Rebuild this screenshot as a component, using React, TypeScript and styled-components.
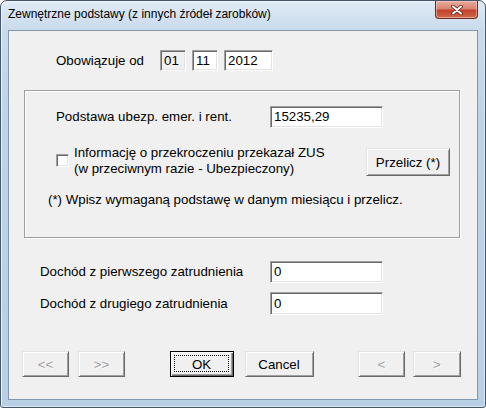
import styled, { createGlobalStyle } from "styled-components";

const GlobalStyle = createGlobalStyle`
  html, body {
    margin: 0;
    padding: 0;
    background: #ffffff;
  }
  body {
    font-family: "Liberation Sans", Arial, sans-serif;
    font-size: 13.3px;
    color: #000;
  }
`;

const Window = styled.div`
  width: 486px;
  height: 408px;
  box-sizing: border-box;
  display: flex;
  flex-direction: column;
  padding: 0 7px 7px 7px;
  border: 1px solid #44566a;
  border-radius: 7px 7px 3px 3px;
  background: linear-gradient(180deg, #e0ebf6 0px, #cadbec 28px, #bed3e8 120px, #b8cfe6 100%);
  box-shadow: inset 1px 1px 0 #eef4fa, inset -1px -1px 0 #dbe7f2;
`;

const TitleBar = styled.div`
  height: 29px;
  display: flex;
  justify-content: space-between;
  align-items: flex-start;
`;

const Title = styled.span`
  font-family: "Liberation Sans", Arial, sans-serif;
  font-size: 12px;
  line-height: 14px;
  margin-top: 6px;
  color: #000;
`;

const CloseButton = styled.div`
  width: 43px;
  height: 18px;
  box-sizing: border-box;
  display: flex;
  align-items: center;
  justify-content: center;
  border: 1px solid #6c2a20;
  border-top: none;
  border-radius: 0 0 4px 4px;
  background: linear-gradient(180deg, #e9ad9e 0%, #d98571 45%, #c3412a 55%, #cf6a4c 100%);
  box-shadow: inset 0 0 0 1px rgba(255, 220, 210, 0.5);
`;

const Client = styled.div`
  flex: 1;
  box-sizing: border-box;
  background: #f0f0f0;
  border: 1px solid #8498ad;
  display: flex;
  flex-direction: column;
`;

const Row = styled.div<{ $top: number; $left: number }>`
  display: flex;
  align-items: center;
  margin-top: ${(p) => p.$top}px;
  padding-left: ${(p) => p.$left}px;
`;

const Label = styled.span<{ $width: number }>`
  width: ${(p) => p.$width}px;
  flex-shrink: 0;
  line-height: 16px;
`;

const Field = styled.div<{ $width: number; $height?: number; $readOnly?: boolean }>`
  width: ${(p) => p.$width}px;
  height: ${(p) => p.$height ?? 22}px;
  box-sizing: border-box;
  flex-shrink: 0;
  background: ${(p) => (p.$readOnly ? "#f0f0f0" : "#ffffff")};
  border-top: 1px solid #a0a0a0;
  border-left: 1px solid #a0a0a0;
  border-bottom: 1px solid #ffffff;
  border-right: 1px solid #ffffff;
  box-shadow: inset 1px 1px 0 #696969, inset -1px -1px 0 #e3e3e3;
  padding: 0 2px 0 3px;
  display: flex;
  align-items: center;
  line-height: 16px;
`;

const DateFields = styled.div`
  display: flex;
  gap: 6px;
`;

const GroupBox = styled.div`
  margin: 19px 0 0 15px;
  width: 436px;
  height: 148px;
  box-sizing: border-box;
  border: 1px solid #a0a0a0;
  box-shadow: inset 1px 1px 0 #ffffff, 1px 1px 0 #ffffff;
  display: flex;
  flex-direction: column;
`;

const CheckRow = styled.div`
  display: flex;
  align-items: flex-start;
  margin-top: 17px;
  padding-left: 31px;
`;

const CheckBox = styled.div`
  width: 13px;
  height: 13px;
  box-sizing: border-box;
  flex-shrink: 0;
  background: #ffffff;
  border-top: 1px solid #a0a0a0;
  border-left: 1px solid #a0a0a0;
  border-bottom: 1px solid #ffffff;
  border-right: 1px solid #ffffff;
  box-shadow: inset 1px 1px 0 #696969, inset -1px -1px 0 #e3e3e3;
  margin-top: 9px;
`;

const CheckText = styled.div`
  margin-left: 5px;
  line-height: 16px;
  width: 292px;
`;

const Button = styled.div<{ $width: number; $height?: number; $top?: number; $disabled?: boolean; $default?: boolean }>`
  width: ${(p) => p.$width}px;
  height: ${(p) => p.$height ?? 26}px;
  margin-top: ${(p) => p.$top ?? 0}px;
  box-sizing: border-box;
  flex-shrink: 0;
  display: flex;
  align-items: center;
  justify-content: center;
  background: #f0f0f0;
  color: ${(p) => (p.$disabled ? "#a0a0a0" : "#000")};
  text-shadow: ${(p) => (p.$disabled ? "1px 1px 0 #ffffff" : "none")};
  border-top: 1px solid ${(p) => (p.$default ? "#000" : "#e3e3e3")};
  border-left: 1px solid ${(p) => (p.$default ? "#000" : "#e3e3e3")};
  border-bottom: 1px solid ${(p) => (p.$default ? "#000" : "#696969")};
  border-right: 1px solid ${(p) => (p.$default ? "#000" : "#696969")};
  box-shadow: ${(p) =>
    p.$default
      ? "inset 1px 1px 0 #ffffff, inset -1px -1px 0 #696969, inset -2px -2px 0 #a0a0a0"
      : "inset 1px 1px 0 #ffffff, inset -1px -1px 0 #a0a0a0"};
  position: relative;
`;

const FocusRing = styled.span`
  position: absolute;
  inset: 3px 4px 4px 3px;
  border: 1px dotted #000;
`;

const Footnote = styled.div`
  margin-top: 15px;
  padding-left: 23px;
  line-height: 16px;
`;

const ButtonBar = styled.div`
  margin-top: 36px;
  padding: 0 16px 0 13px;
  display: flex;
  justify-content: space-between;
`;

const ButtonGroup = styled.div<{ $gap: number }>`
  display: flex;
  gap: ${(p) => p.$gap}px;
`;

function CloseGlyph() {
  return (
    <svg width="12" height="10" viewBox="0 0 12 10">
      <path d="M2 1.5 L10 8.5 M10 1.5 L2 8.5" stroke="#5a1c12" strokeWidth="3.6" strokeLinecap="round" />
      <path d="M2 1.5 L10 8.5 M10 1.5 L2 8.5" stroke="#ffffff" strokeWidth="2" strokeLinecap="round" />
    </svg>
  );
}

export default function App() {
  return (
    <>
      <GlobalStyle />
      <Window>
        <TitleBar>
          <Title>Zewnętrzne podstawy (z innych źródeł zarobków)</Title>
          <CloseButton>
            <CloseGlyph />
          </CloseButton>
        </TitleBar>
        <Client>
          <Row $top={19} $left={47}>
            <Label $width={104}>Obowiązuje od</Label>
            <DateFields>
              <Field $width={26} $height={21} $readOnly>
                01
              </Field>
              <Field $width={26} $height={21}>
                11
              </Field>
              <Field $width={49} $height={21}>
                2012
              </Field>
            </DateFields>
          </Row>

          <GroupBox>
            <Row $top={15} $left={31}>
              <Label $width={214}>Podstawa ubezp. emer. i rent.</Label>
              <Field $width={113}>15235,29</Field>
            </Row>
            <CheckRow>
              <CheckBox />
              <CheckText>
                Informację o przekroczeniu przekazał ZUS
                <br />
                (w przeciwnym razie - Ubezpieczony)
              </CheckText>
              <Button $width={84} $height={28} $top={3}>
                Przelicz (*)
              </Button>
            </CheckRow>
            <Footnote>(*) Wpisz wymaganą podstawę w danym miesiącu i przelicz.</Footnote>
          </GroupBox>

          <Row $top={23} $left={31}>
            <Label $width={230}>Dochód z pierwszego zatrudnienia</Label>
            <Field $width={113}>0</Field>
          </Row>
          <Row $top={9} $left={31}>
            <Label $width={230}>Dochód z drugiego zatrudnienia</Label>
            <Field $width={113} $height={23}>
              0
            </Field>
          </Row>

          <ButtonBar>
            <ButtonGroup $gap={9}>
              <Button $width={47} $disabled>
                &lt;&lt;
              </Button>
              <Button $width={47} $disabled>
                &gt;&gt;
              </Button>
            </ButtonGroup>
            <ButtonGroup $gap={11}>
              <Button $width={64} $default>
                <FocusRing />
                OK
              </Button>
              <Button $width={69}>Cancel</Button>
            </ButtonGroup>
            <ButtonGroup $gap={8}>
              <Button $width={47} $disabled>
                &lt;
              </Button>
              <Button $width={48} $disabled>
                &gt;
              </Button>
            </ButtonGroup>
          </ButtonBar>
        </Client>
      </Window>
    </>
  );
}
